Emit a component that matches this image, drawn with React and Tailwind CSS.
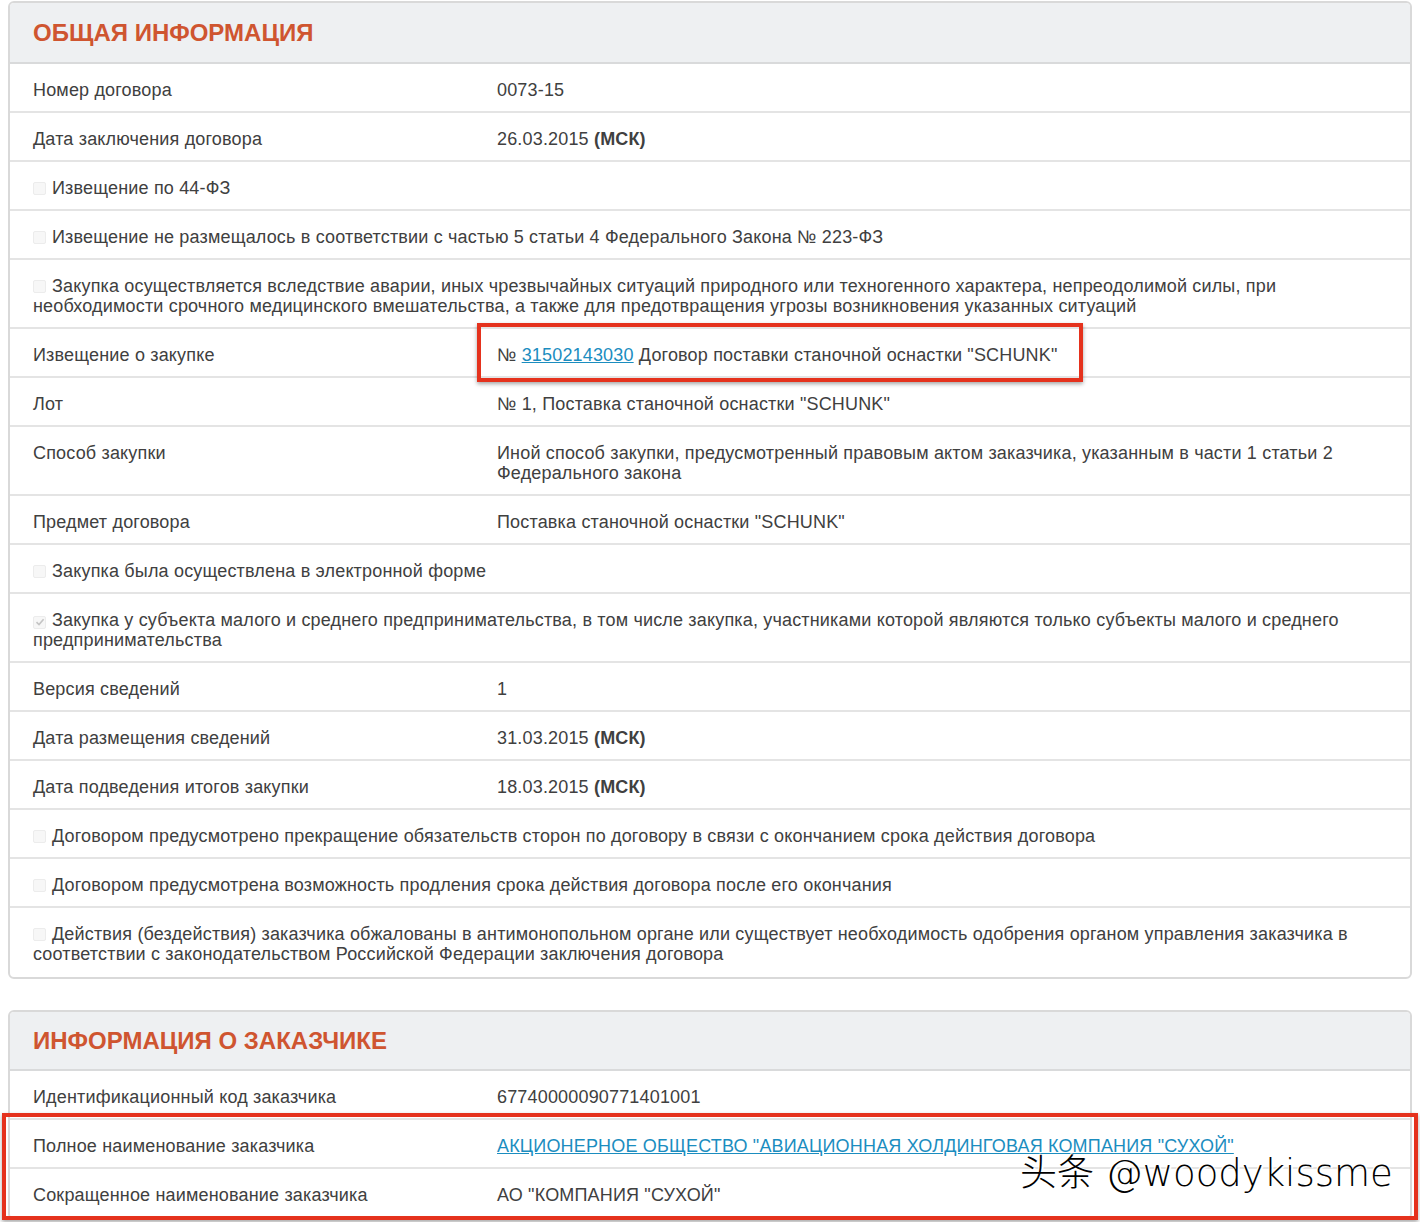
const FONT = { fontFamily: '"Liberation Sans", Arial, sans-serif' };

function Checkbox({ checked }) {
  return (
    <span className="inline-flex items-center justify-center w-[13px] h-[13px] mr-[6px] align-[-1px] rounded-[2px] border border-[#ececec] bg-[#f7f7f7]">
      {checked && (
        <svg width="10" height="10" viewBox="0 0 10 10">
          <path d="M1.5 5.2 L4 7.6 L8.6 2.2" fill="none" stroke="#c4c4c4" strokeWidth="1.6" />
        </svg>
      )}
    </span>
  );
}

function Row({ label, children, last }) {
  return (
    <div className={`grid grid-cols-[464px_1fr] px-[23px] pt-[16px] leading-[20px] ${last ? 'pb-[13px]' : 'pb-[11px] border-b-2 border-[#e4e4e4]'}`}>
      <div>{label}</div>
      <div>{children}</div>
    </div>
  );
}

function CheckRow({ checked, children, last }) {
  return (
    <div className={`px-[23px] pt-[16px] leading-[20px] ${last ? 'pb-[13px]' : 'pb-[11px] border-b-2 border-[#e4e4e4]'}`}>
      <Checkbox checked={checked} />
      {children}
    </div>
  );
}

function Card({ title, children, className, headerH }) {
  return (
    <div className={`mx-[8px] border-2 border-[#d9d9d9] rounded-[6px] bg-white overflow-hidden ${className || ''}`}>
      <div className={`${headerH || 'h-[61px]'} flex items-center px-[23px] bg-[#eef0f2] border-b-2 border-[#d9dadb]`}>
        <h2 className="text-[24px] font-bold text-[#cf5530] uppercase tracking-normal">{title}</h2>
      </div>
      {children}
    </div>
  );
}

const Bold = ({ children }) => <span className="font-bold">{children}</span>;

export default function App() {
  return (
    <div className="relative w-[1420px] h-[1222px] overflow-hidden bg-white text-[18px] tracking-[0.17px] text-[#404040] pt-[1px]" style={FONT}>
      <Card title="Общая информация">
        <Row label="Номер договора">0073-15</Row>
        <Row label="Дата заключения договора">26.03.2015 <Bold>(МСК)</Bold></Row>
        <CheckRow>Извещение по 44-ФЗ</CheckRow>
        <CheckRow>Извещение не размещалось в соответствии с частью 5 статьи 4 Федерального Закона № 223-ФЗ</CheckRow>
        <CheckRow>
          Закупка осуществляется вследствие аварии, иных чрезвычайных ситуаций природного или техногенного характера, непреодолимой силы, при необходимости срочного медицинского вмешательства, а также для предотвращения угрозы возникновения указанных ситуаций
        </CheckRow>
        <Row label="Извещение о закупке">
          № <a href="#" className="text-[#1b8dbf] underline">31502143030</a> Договор поставки станочной оснастки "SCHUNK"
        </Row>
        <Row label="Лот">№ 1, Поставка станочной оснастки "SCHUNK"</Row>
        <Row label="Способ закупки">
          Иной способ закупки, предусмотренный правовым актом заказчика, указанным в части 1 статьи 2 Федерального закона
        </Row>
        <Row label="Предмет договора">Поставка станочной оснастки "SCHUNK"</Row>
        <CheckRow>Закупка была осуществлена в электронной форме</CheckRow>
        <CheckRow checked>
          Закупка у субъекта малого и среднего предпринимательства, в том числе закупка, участниками которой являются только субъекты малого и среднего предпринимательства
        </CheckRow>
        <Row label="Версия сведений">1</Row>
        <Row label="Дата размещения сведений">31.03.2015 <Bold>(МСК)</Bold></Row>
        <Row label="Дата подведения итогов закупки">18.03.2015 <Bold>(МСК)</Bold></Row>
        <CheckRow>Договором предусмотрено прекращение обязательств сторон по договору в связи с окончанием срока действия договора</CheckRow>
        <CheckRow>Договором предусмотрена возможность продления срока действия договора после его окончания</CheckRow>
        <CheckRow last>
          Действия (бездействия) заказчика обжалованы в антимонопольном органе или существует необходимость одобрения органом управления заказчика в соответствии с законодательством Российской Федерации заключения договора
        </CheckRow>
      </Card>

      <Card title="Информация о заказчике" className="mt-[31px]" headerH="h-[59px]">
        <Row label="Идентификационный код заказчика">67740000090771401001</Row>
        <Row label="Полное наименование заказчика">
          <a href="#" className="text-[#1b8dbf] underline">АКЦИОНЕРНОЕ ОБЩЕСТВО "АВИАЦИОННАЯ ХОЛДИНГОВАЯ КОМПАНИЯ "СУХОЙ"</a>
        </Row>
        <Row label="Сокращенное наименование заказчика">АО "КОМПАНИЯ "СУХОЙ"</Row>
      </Card>

      {/* red annotation frames */}
      <div className="absolute left-[477px] top-[323px] w-[606px] h-[59px] border-[4px] border-[#e5321d] shadow-[0_2px_4px_rgba(0,0,0,0.35)]" />
      <div className="absolute left-[2px] top-[1113px] w-[1416px] h-[107px] border-[4px] border-[#e5321d] shadow-[0_2px_4px_rgba(0,0,0,0.35)]" />

      {/* watermark */}
      <div
        className="absolute left-[1020px] top-[1148px] text-[37px] leading-[44px] font-extralight tracking-normal text-black whitespace-nowrap [text-shadow:2px_1px_0_#fff,-1px_-1px_0_#fff]"
        style={{ fontFamily: '"DejaVu Sans", "Noto Sans CJK SC", sans-serif' }}
      >
        <span style={{ fontFamily: '"Noto Sans CJK SC", sans-serif' }}>头条</span> @woodykissme
      </div>
    </div>
  );
}
